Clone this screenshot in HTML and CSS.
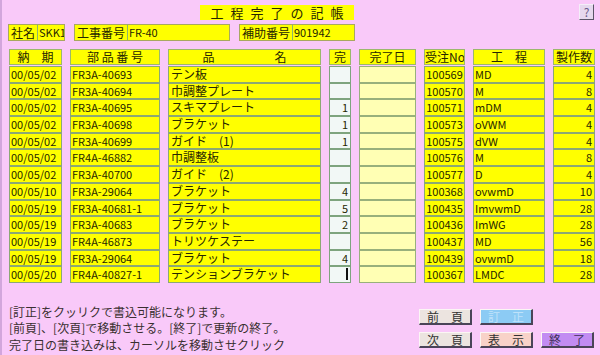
FILE: index.html
```html
<!DOCTYPE html>
<html lang="ja">
<head>
  <meta charset="UTF-8" />
  <title>工程完了の記帳</title>
  <link rel="stylesheet" href="styles.css">
</head>
<body>

  <div class="topbar">
    <div class="title">工程完了の記帳</div>
    <button class="help">?</button>
  </div>

  <div class="info">
    <div class="field f-company"><span class="lbl">社名</span><span class="val">SKK1</span></div>
    <div class="field f-job"><span class="lbl">工事番号</span><span class="val">FR-40</span></div>
    <div class="field f-sub"><span class="lbl">補助番号</span><span class="val">901942</span></div>
  </div>

  <div class="grid head">
    <div class="h">納　期</div>
    <div class="h">部 品 番 号</div>
    <div class="h">品　　　　　名</div>
    <div class="h">完</div>
    <div class="h">完了日</div>
    <div class="h">受注No</div>
    <div class="h">工　程</div>
    <div class="h">製作数</div>
  </div>

  <div class="grid body" id="rows"></div>

  <div class="bottom">
    <div class="notes">
      <p>[訂正]をクッリクで書込可能になります。</p>
      <p>[前頁]、[次頁]で移動させる。[終了]で更新の終了。</p>
      <p>完了日の書き込みは、カーソルを移動させクリック</p>
    </div>
    <div class="buttons">
      <button class="btn gray">前　頁</button>
      <button class="btn blue">訂　正</button>
      <span></span>
      <button class="btn gray">次　頁</button>
      <button class="btn peach">表　示</button>
      <button class="btn purple">終　了</button>
    </div>
  </div>

  <script>
    const rows = [
      ["00/05/02", "FR3A-40693", "テン板", "", "100569", "MD", 4],
      ["00/05/02", "FR3A-40694", "巾調整プレート", "", "100570", "M", 8],
      ["00/05/02", "FR3A-40695", "スキマプレート", "1", "100571", "mDM", 4],
      ["00/05/02", "FR3A-40698", "ブラケット", "1", "100573", "oVWM", 4],
      ["00/05/02", "FR3A-40699", "ガイド　(1)", "1", "100575", "dVW", 4],
      ["00/05/02", "FR4A-46882", "巾調整板", "", "100576", "M", 8],
      ["00/05/02", "FR3A-40700", "ガイド　(2)", "", "100577", "D", 4],
      ["00/05/10", "FR3A-29064", "ブラケット", "4", "100368", "ovwmD", 10],
      ["00/05/19", "FR3A-40681-1", "ブラケット", "5", "100435", "ImvwmD", 28],
      ["00/05/19", "FR3A-40683", "ブラケット", "2", "100436", "ImWG", 28],
      ["00/05/19", "FR4A-46873", "トリツケステー", "", "100437", "MD", 56],
      ["00/05/19", "FR3A-29064", "ブラケット", "4", "100439", "ovwmD", 18],
      ["00/05/20", "FR4A-40827-1", "テンションブラケット", "|", "100367", "LMDC", 28]
    ];

    const box = document.getElementById("rows");
    rows.forEach(function (r) {
      const done = r[3] === "|" ? '<span class="caret"></span>' : r[3];
      box.innerHTML +=
        '<div class="c lat">' + r[0] + '</div>' +
        '<div class="c lat">' + r[1] + '</div>' +
        '<div class="c">' + r[2] + '</div>' +
        '<div class="c lat done">' + done + '</div>' +
        '<div class="c date"></div>' +
        '<div class="c lat order">' + r[4] + '</div>' +
        '<div class="c lat">' + r[5] + '</div>' +
        '<div class="c lat num">' + r[6] + '</div>';
    });
  </script>

</body>
</html>
```

FILE: styles.css
```css
* {
  box-sizing: border-box;
}
body {
  margin: 0;
  width: 600px;
  height: 355px;
  padding: 4px 6px 0 7px;
  background-color: #f9c9f9;
  border-left: 2px solid #d2a6dc;
  font-family: "Noto Sans CJK JP", "Liberation Sans", sans-serif;
  font-size: 12px;
  color: #262600;
  overflow: hidden;
}
p {
  margin: 0;
}
button {
  font-family: inherit;
  font-size: 12px;
  padding: 0;
  cursor: pointer;
}

.topbar {
  display: flex;
  align-items: flex-start;
  height: 20px;
}
.title {
  margin: 1px 0 0 191px;
  width: 154px;
  height: 15px;
  line-height: 15px;
  background-color: #ffff00;
  text-align: center;
  font-size: 13px;
  letter-spacing: 7px;
  text-indent: 7px;
}
.help {
  margin-left: auto;
  width: 15px;
  height: 16px;
  line-height: 14px;
  background-color: #e6d8ee;
  color: #6a5a8a;
  border: 1px solid #f4eef8;
  border-right-color: #5a5468;
  border-bottom-color: #5a5468;
}

.info {
  display: flex;
  gap: 9px;
  margin: 0 0 8px -1px;
  height: 17px;
}
.field {
  display: flex;
  border: 1px solid #a8a860;
  background-color: #ffff00;
  white-space: nowrap;
  overflow: hidden;
}
.field .lbl {
  flex-shrink: 0;
  padding: 0 2px 0 2px;
  line-height: 15px;
  border-right: 1px solid #8cb46c;
}
.field .val {
  flex: 1;
  padding-left: 1px;
  line-height: 15px;
  font-size: 11px;
}
.f-company {
  width: 57px;
}
.f-job {
  width: 156px;
}
.f-sub {
  width: 116px;
}

.grid {
  display: grid;
  grid-template-columns: 53px 90px 153px 22px 57px 41px 72px 42px;
  column-gap: 8px;
}
.head {
  height: 16px;
  margin-bottom: 1px;
}
.h {
  background-color: #ffff00;
  border: 1px solid #9cb86c;
  text-align: center;
  line-height: 14px;
  white-space: pre;
  overflow: hidden;
}
.body {
  grid-auto-rows: 16.7px;
}
.c {
  background-color: #ffff00;
  border: 1px solid #8ca874;
  line-height: 14px;
  padding-left: 2px;
  white-space: pre;
  overflow: hidden;
}
.c.lat {
  font-size: 11px;
  padding-left: 1px;
}
.c.order {
  padding-left: 0;
  text-align: center;
}
.c.done {
  background-color: #f2f8f6;
  border-color: #7ea47e;
  text-align: right;
  padding-right: 2px;
}
.c.date {
  background-color: #ffffb4;
  border-color: #98b07c;
}
.c.num {
  text-align: right;
  padding-right: 2px;
}
.caret {
  display: inline-block;
  width: 2px;
  height: 12px;
  margin-top: 1px;
  vertical-align: top;
  background-color: #111;
}

.bottom {
  display: flex;
  justify-content: space-between;
  margin-top: 21px;
}
.notes {
  line-height: 16.5px;
  color: #3a3030;
}
.buttons {
  display: grid;
  grid-template-columns: 53px 53px 53px;
  grid-template-rows: 16px 16px;
  column-gap: 8px;
  row-gap: 7px;
  margin-top: 5px;
}
.btn {
  border: 1px solid #fbf6f4;
  border-right: 2px solid #4a4458;
  border-bottom: 2px solid #4a4458;
  line-height: 13px;
  color: #333;
}
.gray {
  background-color: #ece4e0;
}
.blue {
  background-color: #8ccbf4;
  color: #bfe2fa;
}
.peach {
  background-color: #f8d2c8;
}
.purple {
  background-color: #c28cf2;
  color: #40305a;
}
```
